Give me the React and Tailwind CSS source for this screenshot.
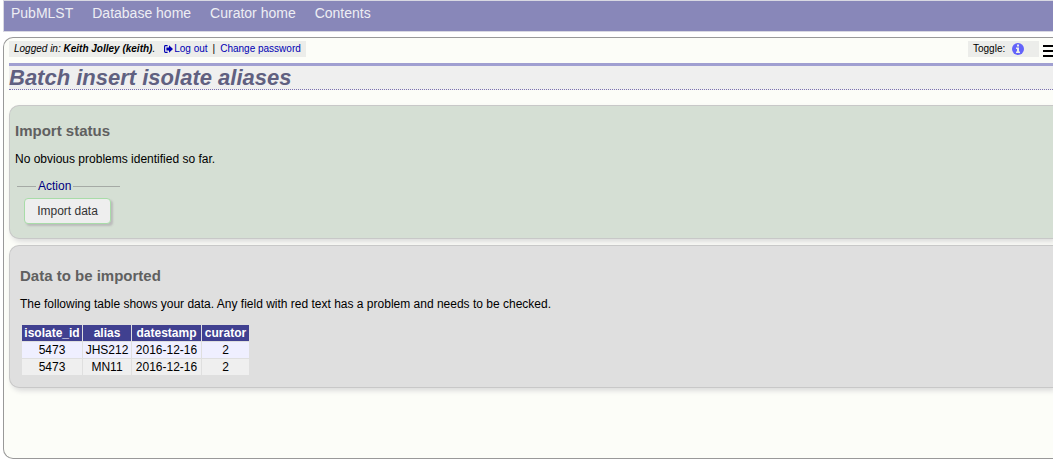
const menu = ["PubMLST", "Database home", "Curator home", "Contents"];
const columns = ["isolate_id", "alias", "datestamp", "curator"];
const rows = [
  ["5473", "JHS212", "2016-12-16", "2"],
  ["5473", "MN11", "2016-12-16", "2"],
];

function SignOutIcon() {
  return (
    <svg className="h-2 w-[9px]" viewBox="0 0 9 8" aria-hidden="true">
      <path d="M3.6 .6H1.4Q.6 .6 .6 1.4V6.6Q.6 7.4 1.4 7.4H3.6" fill="none" stroke="currentColor" strokeWidth="1.1" />
      <path d="M2.4 2.4H5V.3L9 4L5 7.7V5.6H2.4Z" fill="currentColor" />
    </svg>
  );
}

function InfoIcon() {
  return (
    <svg className="h-3 w-3" viewBox="0 0 12 12" aria-hidden="true">
      <circle cx="6" cy="6" r="6" fill="#6363fa" />
      <path d="M5 1.6H7V3.4H5ZM4 4.4H7V8.4H8V10H4V8.4H5V6H4Z" fill="#ecedea" />
    </svg>
  );
}

function MenuIcon() {
  return (
    <svg className="h-3 w-[10px]" viewBox="0 0 10 12" aria-hidden="true">
      <path d="M0 0H10V2H0ZM0 5H10V7H0ZM0 10H10V12H0Z" fill="#000" />
    </svg>
  );
}

export default function App() {
  return (
    <div className="min-h-screen overflow-hidden bg-white pl-[3px] font-['Liberation_Sans',Arial,sans-serif] text-xs text-black">
      <nav className="flex h-8 gap-[19px] border border-r-0 border-[#d8d8e2] bg-[#8887b9] px-[7px] pt-[2px] text-sm leading-5 text-[#eeeef4]">
        {menu.map((item) => (
          <a key={item} href="#">{item}</a>
        ))}
      </nav>

      <main className="mt-[5px] rounded-l-[10px] border border-r-0 border-[#999] bg-[#fcfdf8] pt-[3px] pb-[70px] pl-[5px]">
        <div className="flex items-start justify-between text-[10px] leading-4">
          <div className="flex gap-[5px] bg-[#ecedea] px-[5px]">
            <i>Logged in: <b>Keith Jolley (keith)</b>.</i>
            <a href="#" className="ml-1 flex items-center gap-px text-[#0000b4]"><SignOutIcon />Log out</a>
            <span>|</span>
            <a href="#" className="text-[#0000b4]">Change password</a>
          </div>
          <div className="flex items-start gap-1">
            <div className="flex w-[71px] items-center gap-[7px] bg-[#ecedea] pl-[5px]">
              Toggle:
              <button type="button" aria-label="Toggle information"><InfoIcon /></button>
            </div>
            <button type="button" aria-label="Menu" className="mt-1"><MenuIcon /></button>
          </div>
        </div>

        <h1 className="mt-[6px] border-t-3 border-b border-t-[#a09fd1] border-b-[#7a70b0] [border-bottom-style:dotted] bg-[#efefef] text-[22px] leading-[23px] font-bold italic text-[#606080]">
          Batch insert isolate aliases
        </h1>

        <section className="mt-[15px] rounded-l-[10px] border border-r-0 border-[#c8c8c8] bg-[#d5dfd4] px-[5px] pt-[15px] pb-[14px] shadow-[2px_3px_5px_#ddd]">
          <h2 className="text-[15px] leading-5 font-bold text-[#606060]">Import status</h2>
          <p className="mt-[10px] leading-4">No obvious problems identified so far.</p>
          <fieldset className="mx-[2px] mt-[11px] w-[103px] border-t border-[#a5aaa5] px-[7px]">
            <legend className="ml-3 px-[2px] leading-4 text-[#000080]">Action</legend>
            <button type="button" className="mt-1 block h-[26px] w-[87px] rounded-sm border border-[#a8dca8] bg-[#eee] text-[#333] shadow-[2px_2px_2px_#bbb]">
              Import data
            </button>
          </fieldset>
        </section>

        <section className="mt-[6px] rounded-l-[10px] border border-r-0 border-[#c8c8c8] bg-[#dfdfdf] px-[10px] pt-5 pb-[11px] shadow-[2px_3px_5px_#ddd]">
          <h2 className="text-[15px] leading-5 font-bold text-[#606060]">Data to be imported</h2>
          <p className="mt-[10px] leading-4">
            The following table shows your data. Any field with red text has a problem and needs to be checked.
          </p>
          <table className="mt-3 ml-px border-separate border-spacing-px text-center leading-4">
            <colgroup>
              <col className="w-[60px]" />
              <col className="w-[48px]" />
              <col className="w-[69px]" />
              <col className="w-[47px]" />
            </colgroup>
            <thead>
              <tr className="bg-[#404090] text-white">
                {columns.map((column) => (
                  <th key={column} scope="col" className="px-[2px] font-bold">{column}</th>
                ))}
              </tr>
            </thead>
            <tbody>
              {rows.map((row, index) => (
                <tr key={index} className="odd:bg-[#efefff] even:bg-[#efefef]">
                  {row.map((cell, i) => (
                    <td key={i} className="px-[2px]">{cell}</td>
                  ))}
                </tr>
              ))}
            </tbody>
          </table>
        </section>
      </main>
    </div>
  );
}
